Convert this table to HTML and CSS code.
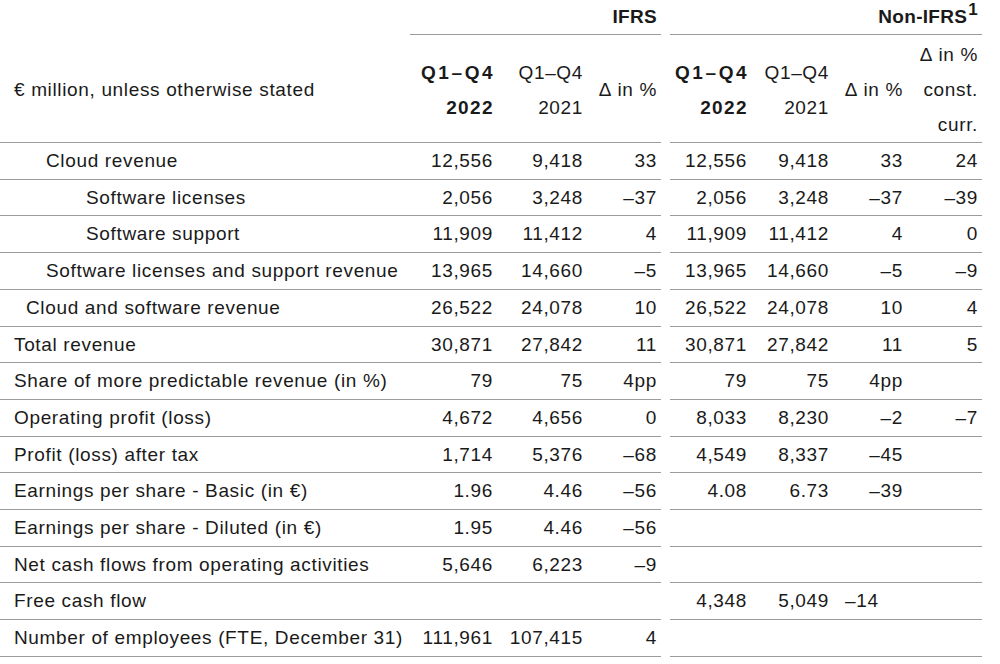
FILE: index.html
```html
<!DOCTYPE html>
<html lang="en">
<head>
<meta charset="utf-8">
<title>Key figures</title>
<link rel="stylesheet" href="styles.css">
</head>
<body>
<table class="kpi">
  <colgroup>
    <col class="w-label"><col class="w-a"><col class="w-b"><col class="w-d"><col class="w-gap"><col class="w-e"><col class="w-f"><col class="w-g"><col class="w-h">
  </colgroup>
  <thead>
    <tr class="group-row">
      <th class="blank"></th>
      <th colspan="3" class="grp">IFRS</th>
      <th class="gap"></th>
      <th colspan="4" class="grp">Non-IFRS<sup class="note">1</sup></th>
    </tr>
    <tr class="col-row">
      <th class="label">€ million, unless otherwise stated</th>
      <th class="num strong"><span class="period">Q1–Q4</span><br>2022</th>
      <th class="num">Q1–Q4<br>2021</th>
      <th class="num">∆ in %</th>
      <th class="gap"></th>
      <th class="num strong"><span class="period">Q1–Q4</span><br>2022</th>
      <th class="num">Q1–Q4<br>2021</th>
      <th class="num">∆ in %</th>
      <th class="num">∆ in %<br>const.<br>curr.</th>
    </tr>
  </thead>
  <tbody>
    <tr><td class="label l2">Cloud revenue</td><td class="num">12,556</td><td class="num">9,418</td><td class="num">33</td><td class="gap"></td><td class="num">12,556</td><td class="num">9,418</td><td class="num">33</td><td class="num">24</td></tr>
    <tr><td class="label l3">Software licenses</td><td class="num">2,056</td><td class="num">3,248</td><td class="num">–37</td><td class="gap"></td><td class="num">2,056</td><td class="num">3,248</td><td class="num">–37</td><td class="num">–39</td></tr>
    <tr><td class="label l3">Software support</td><td class="num">11,909</td><td class="num">11,412</td><td class="num">4</td><td class="gap"></td><td class="num">11,909</td><td class="num">11,412</td><td class="num">4</td><td class="num">0</td></tr>
    <tr><td class="label l2">Software licenses and support revenue</td><td class="num">13,965</td><td class="num">14,660</td><td class="num">–5</td><td class="gap"></td><td class="num">13,965</td><td class="num">14,660</td><td class="num">–5</td><td class="num">–9</td></tr>
    <tr><td class="label l1">Cloud and software revenue</td><td class="num">26,522</td><td class="num">24,078</td><td class="num">10</td><td class="gap"></td><td class="num">26,522</td><td class="num">24,078</td><td class="num">10</td><td class="num">4</td></tr>
    <tr><td class="label">Total revenue</td><td class="num">30,871</td><td class="num">27,842</td><td class="num">11</td><td class="gap"></td><td class="num">30,871</td><td class="num">27,842</td><td class="num">11</td><td class="num">5</td></tr>
    <tr><td class="label">Share of more predictable revenue (in %)</td><td class="num">79</td><td class="num">75</td><td class="num">4pp</td><td class="gap"></td><td class="num">79</td><td class="num">75</td><td class="num">4pp</td><td class="num"></td></tr>
    <tr><td class="label">Operating profit (loss)</td><td class="num">4,672</td><td class="num">4,656</td><td class="num">0</td><td class="gap"></td><td class="num">8,033</td><td class="num">8,230</td><td class="num">–2</td><td class="num">–7</td></tr>
    <tr><td class="label">Profit (loss) after tax</td><td class="num">1,714</td><td class="num">5,376</td><td class="num">–68</td><td class="gap"></td><td class="num">4,549</td><td class="num">8,337</td><td class="num">–45</td><td class="num"></td></tr>
    <tr><td class="label">Earnings per share - Basic (in €)</td><td class="num">1.96</td><td class="num">4.46</td><td class="num">–56</td><td class="gap"></td><td class="num">4.08</td><td class="num">6.73</td><td class="num">–39</td><td class="num"></td></tr>
    <tr><td class="label">Earnings per share - Diluted (in €)</td><td class="num">1.95</td><td class="num">4.46</td><td class="num">–56</td><td class="gap"></td><td class="num"></td><td class="num"></td><td class="num"></td><td class="num"></td></tr>
    <tr><td class="label">Net cash flows from operating activities</td><td class="num">5,646</td><td class="num">6,223</td><td class="num">–9</td><td class="gap"></td><td class="num"></td><td class="num"></td><td class="num"></td><td class="num"></td></tr>
    <tr><td class="label">Free cash flow</td><td class="num"></td><td class="num"></td><td class="num"></td><td class="gap"></td><td class="num">4,348</td><td class="num">5,049</td><td class="num left">–14</td><td class="num"></td></tr>
    <tr><td class="label">Number of employees (FTE, December 31)</td><td class="num">111,961</td><td class="num">107,415</td><td class="num">4</td><td class="gap"></td><td class="num"></td><td class="num"></td><td class="num"></td><td class="num"></td></tr>
  </tbody>
</table>
</body>
</html>
```

FILE: styles.css
```css
html, body {
  margin: 0;
  padding: 0;
  background: #ffffff;
}

body {
  font-family: "Liberation Sans", Arial, sans-serif;
  font-size: 19px;
  letter-spacing: 0.65px;
  color: #1a1a1a;
}

.kpi {
  width: 982px;
  table-layout: fixed;
  border-collapse: separate;
  border-spacing: 0;
}

.w-label { width: 410px; }
.w-a { width: 87px; }
.w-b { width: 90px; }
.w-d { width: 74px; }
.w-gap { width: 9px; }
.w-e { width: 81px; }
.w-f { width: 82px; }
.w-g { width: 74px; }
.w-h { width: 75px; }

.kpi th,
.kpi td {
  padding: 0 4px 0 0;
  line-height: 35.7px;
  font-weight: normal;
  white-space: nowrap;
  border-bottom: 1px solid #9c9c9c;
  vertical-align: middle;
}

.group-row th {
  line-height: 34px;
  border-bottom: none;
  text-align: right;
}

.group-row th.grp {
  font-weight: bold;
  letter-spacing: 0.3px;
  border-bottom: 1px solid #9c9c9c;
}

.note {
  font-size: 17px;
  line-height: 0;
  vertical-align: 8px;
  margin-left: 1px;
}

.col-row th {
  padding-top: 2px;
  line-height: 35px;
}

.kpi th.gap,
.kpi td.gap {
  border-bottom: none;
  padding: 0;
}

.kpi .label {
  text-align: left;
  padding-left: 14px;
}

.kpi .l1 { padding-left: 26px; }
.kpi .l2 { padding-left: 46px; }
.kpi .l3 { padding-left: 86px; }

.kpi .num {
  text-align: right;
}

.kpi th.strong {
  font-weight: bold;
  letter-spacing: 1.4px;
  padding-right: 3px;
}

.kpi th.strong .period {
  letter-spacing: 2.6px;
  margin-right: -1.2px;
}

.kpi td.left {
  text-align: left;
  padding-left: 12px;
}
```
